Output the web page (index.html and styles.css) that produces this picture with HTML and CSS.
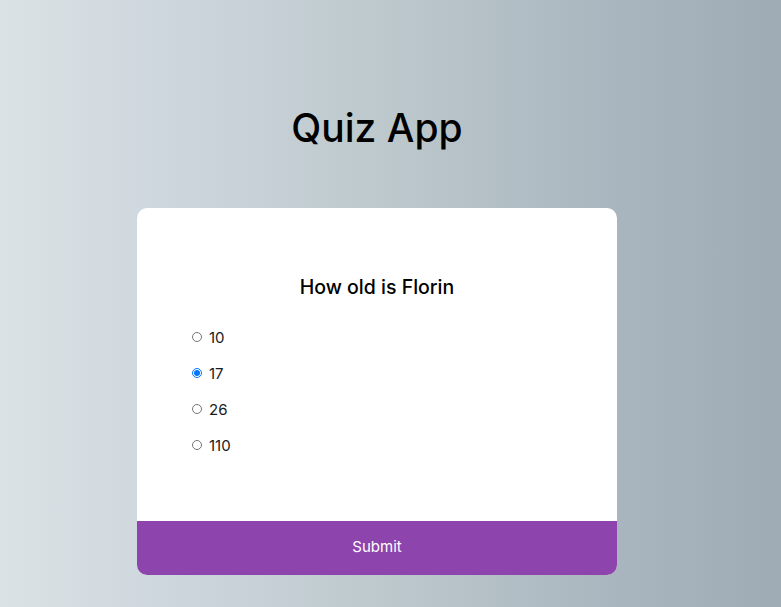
FILE: index.html
```html
<!DOCTYPE html>
<html lang="en">
<head>
<meta charset="UTF-8">
<title>Quiz App</title>
<link rel="stylesheet" href="styles.css">
</head>
<body>
  <h1 class="app-title">Quiz App</h1>
  <div class="quiz-card">
    <div class="quiz-body">
      <h2 class="question">How old is Florin</h2>
      <ul class="answers">
        <li class="answer"><input type="radio" name="answer" id="a"><label for="a">10</label></li>
        <li class="answer"><input type="radio" name="answer" id="b" checked><label for="b">17</label></li>
        <li class="answer"><input type="radio" name="answer" id="c"><label for="c">26</label></li>
        <li class="answer"><input type="radio" name="answer" id="d"><label for="d">110</label></li>
      </ul>
    </div>
    <button class="submit">Submit</button>
  </div>
</body>
</html>
```
FILE: styles.css
```css
* { box-sizing: border-box; }
html, body { height: 100%; }
body {
  margin: 0;
  padding-right: 27px;
  font-family: "Inter", "Open Sans", sans-serif;
  background: linear-gradient(to right, #dae2e5 0%, #cfd7de 20%, #bcc8cc 50%, #a9b5be 80%, #9eabb5 100%);
  display: flex;
  flex-direction: column;
  align-items: center;
}
.app-title {
  margin: 103px 0 0;
  font-size: 39px;
  font-weight: 500;
  line-height: 50px;
  color: #000;
}
.quiz-card {
  margin-top: 55px;
  width: 480px;
  background: #fff;
  border-radius: 10px;
  overflow: hidden;
}
.quiz-body {
  padding: 64px 55px 58px;
}
.question {
  margin: 0;
  text-align: center;
  font-size: 19.5px;
  font-weight: 500;
  line-height: 30px;
  color: #000;
}
.answers {
  list-style: none;
  margin: 17px 0 0;
  padding: 0;
}
.answer {
  display: flex;
  align-items: center;
  height: 36px;
  font-size: 15px;
  color: #1a1a1a;
}
.answer input {
  margin: 0 7px 0 0;
  width: 10px;
  height: 10px;
}
.submit {
  display: block;
  width: 100%;
  height: 54px;
  padding: 0 0 3px;
  border: none;
  background: #8e44ad;
  color: #fff;
  font-family: inherit;
  font-size: 15px;
  cursor: pointer;
}
```
